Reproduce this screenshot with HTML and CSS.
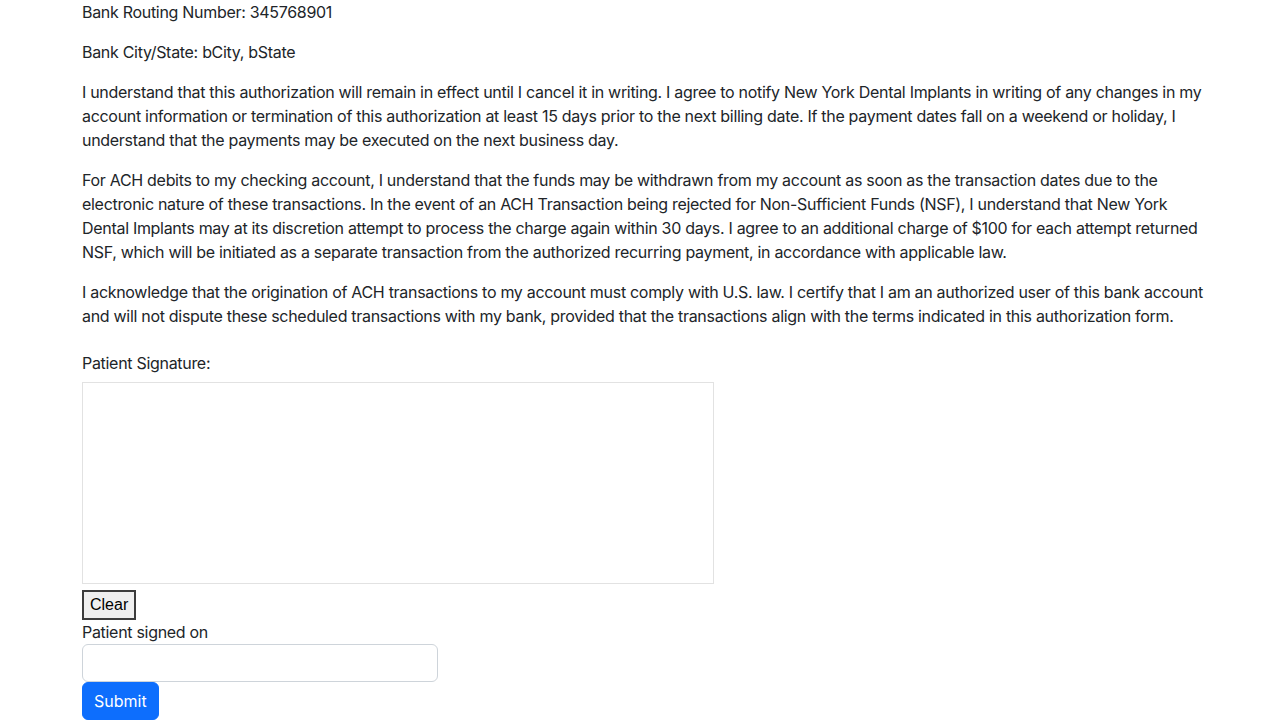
FILE: index.html
```html
<!DOCTYPE html>
<html lang="en">
<head>
<meta charset="utf-8">
<title>ACH Authorization</title>
<link rel="stylesheet" href="styles.css">
</head>
<body>
<div class="container">
  <p class="top-line">Bank Routing Number: 345768901</p>
  <p>Bank City/State: bCity, bState</p>
  <p class="terms">I understand that this authorization will remain in effect until I cancel it in writing. I agree to notify New York Dental Implants in writing of any changes in my<br>account information or termination of this authorization at least 15 days prior to the next billing date. If the payment dates fall on a weekend or holiday, I<br>understand that the payments may be executed on the next business day.</p>
  <p class="terms">For ACH debits to my checking account, I understand that the funds may be withdrawn from my account as soon as the transaction dates due to the<br>electronic nature of these transactions. In the event of an ACH Transaction being rejected for Non-Sufficient Funds (NSF), I understand that New York<br>Dental Implants may at its discretion attempt to process the charge again within 30 days. I agree to an additional charge of $100 for each attempt returned<br>NSF, which will be initiated as a separate transaction from the authorized recurring payment, in accordance with applicable law.</p>
  <p class="terms">I acknowledge that the origination of ACH transactions to my account must comply with U.S. law. I certify that I am an authorized user of this bank account<br>and will not dispute these scheduled transactions with my bank, provided that the transactions align with the terms indicated in this authorization form.</p>

  <div class="signature">
    <label class="sig-label">Patient Signature:</label>
    <canvas class="sig-pad" width="630" height="200"></canvas>
    <button type="button" class="clear-btn">Clear</button>
  </div>
  <label class="date-label" for="signed">Patient signed on</label>
  <input id="signed" class="form-control" type="text">
  <button type="submit" class="btn-primary">Submit</button>
</div>
</body>
</html>
```
FILE: styles.css
```css
* { box-sizing: border-box; }
html, body { margin: 0; padding: 0; }
body {
  font-family: Inter, "Noto Sans", "Liberation Sans", sans-serif;
  font-size: 16px;
  line-height: 1.5;
  letter-spacing: -0.3px;
  color: #212529;
  background: #fff;
}
.container {
  width: 1140px;
  margin: 0 auto;
  padding: 0 12px;
}
p {
  margin: 0 0 16px;
}
.terms {
  white-space: nowrap;
}
.signature {
  padding-top: 7px;
}
.sig-label {
  display: block;
  margin-bottom: 7px;
}
.sig-pad {
  display: block;
  width: 632px;
  height: 202px;
  border: 1px solid #e2e2e2;
}
.clear-btn {
  display: block;
  margin-top: 6px;
  font-family: "Liberation Sans", Arial, sans-serif;
  font-size: 16px;
  line-height: 24px;
  letter-spacing: 0;
  padding: 1px 6px;
  background: #efefef;
  color: #000;
  border: 2px solid #3c3c3c;
  border-radius: 0;
}
.date-label {
  display: block;
}
.form-control {
  display: block;
  width: 356px;
  height: 38px;
  padding: 6px 12px;
  font: inherit;
  border: 1px solid #ced4da;
  border-radius: 6px;
  background: #fff;
}
.btn-primary {
  display: block;
  font: inherit;
  line-height: 24px;
  padding: 6px 11px;
  color: #fff;
  background: #0d6efd;
  border: 1px solid #0d6efd;
  border-radius: 6px;
}
```
